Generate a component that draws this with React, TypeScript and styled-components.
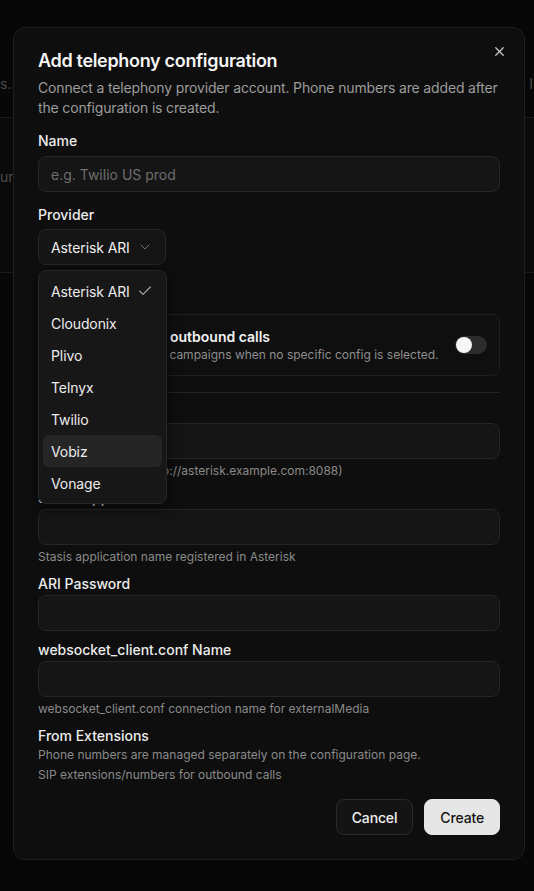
import styled, { createGlobalStyle } from 'styled-components';
import { X, ChevronDown, Check } from 'lucide-react';

const GlobalStyle = createGlobalStyle`
  html, body {
    margin: 0;
    padding: 0;
    background: #070707;
    font-family: Inter, 'Noto Sans', sans-serif;
    -webkit-font-smoothing: antialiased;
  }
  * { box-sizing: border-box; }
`;

const PageBehind = styled.div`
  height: 891px;
  padding-top: 74px;
  color: #4a4a4a;
  font-size: 14px;
  overflow: hidden;
`;

const PageHeader = styled.div`
  display: flex;
  justify-content: space-between;
  height: 20px;
  line-height: 20px;
`;

const PageFragment = styled.span<{ $pad?: number }>`
  padding: 0 ${(p) => p.$pad ?? 0}px;
  white-space: nowrap;
`;

const TableCard = styled.div`
  margin-top: 23px;
  height: 156px;
  background: #0a0a0a;
  border-top: 1px solid #1a1a1a;
  border-bottom: 1px solid #1a1a1a;
  padding-top: 50px;
`;

const Dialog = styled.div`
  position: fixed;
  top: 27px;
  left: 13px;
  width: 512px;
  padding: 24px;
  background: #0e0e0e;
  border: 1px solid #1f1f1f;
  border-radius: 12px;
  color: #f2f2f2;
`;

const CloseButton = styled.button`
  position: absolute;
  top: 15px;
  right: 17px;
  width: 16px;
  height: 16px;
  padding: 0;
  border: none;
  background: none;
  color: #c8c8c8;
  display: flex;
  align-items: center;
  justify-content: center;
`;

const Header = styled.div`
  display: flex;
  flex-direction: column;
  gap: 8px;
`;

const Title = styled.h2`
  margin: 0;
  font-size: 18px;
  line-height: 18px;
  font-weight: 600;
  color: #f5f5f5;
  letter-spacing: -0.32px;
`;

const Description = styled.p`
  margin: 0;
  font-size: 14px;
  line-height: 20px;
  color: #9c9c9c;
  letter-spacing: -0.16px;
`;

const Form = styled.div`
  margin-top: 16px;
  display: flex;
  flex-direction: column;
  gap: 16px;
`;

const Field = styled.div<{ $gap: number }>`
  display: flex;
  flex-direction: column;
  gap: ${(p) => p.$gap}px;
  position: relative;
`;

const Label = styled.label`
  font-size: 14px;
  line-height: 14px;
  font-weight: 500;
  color: #ececec;
`;

const Input = styled.input`
  height: 36px;
  width: 100%;
  padding: 0 12px;
  border-radius: 8px;
  border: 1px solid #262626;
  background: #151515;
  color: #f2f2f2;
  font-family: inherit;
  font-size: 14px;
  outline: none;

  &::placeholder {
    color: #6e6e6e;
  }
`;

const Help = styled.p`
  margin: 0;
  font-size: 12px;
  line-height: 16px;
  color: #8a8a8a;
`;

const SelectTrigger = styled.button`
  align-self: flex-start;
  height: 36px;
  padding: 0 12px;
  display: flex;
  align-items: center;
  gap: 7px;
  border-radius: 8px;
  border: 1px solid #262626;
  background: #151515;
  color: #f0f0f0;
  font-family: inherit;
  font-size: 14px;
  letter-spacing: -0.1px;

  svg {
    color: #707070;
  }
`;

const Popover = styled.div`
  position: absolute;
  top: calc(100% + 5px);
  left: 0;
  z-index: 5;
  width: 129px;
  padding: 4px;
  border-radius: 8px;
  border: 1px solid #272727;
  background: #171717;
  box-shadow: 0 4px 14px rgba(0, 0, 0, 0.5);
`;

const Option = styled.div<{ $active?: boolean }>`
  position: relative;
  height: 32px;
  padding: 0 8px;
  display: flex;
  align-items: center;
  border-radius: 6px;
  font-size: 14px;
  letter-spacing: -0.1px;
  color: #ececec;
  background: ${(p) => (p.$active ? '#252525' : 'transparent')};

  svg {
    position: absolute;
    right: 9px;
    color: #a5a5a5;
  }
`;

const DefaultCard = styled.div`
  margin-top: 33px;
  padding: 12px;
  border: 1px solid #1f1f1f;
  border-radius: 8px;
  background: #0f0f0f;
  display: flex;
  align-items: center;
  justify-content: space-between;
  gap: 8px;
`;

const CardText = styled.div`
  display: flex;
  flex-direction: column;
  white-space: nowrap;
`;

const CardTitle = styled.div`
  font-size: 14px;
  line-height: 20px;
  font-weight: 600;
  color: #f2f2f2;
`;

const CardDesc = styled.div`
  font-size: 12px;
  line-height: 16px;
  color: #8e8e8e;
`;

const Switch = styled.div`
  flex-shrink: 0;
  width: 32px;
  height: 18px;
  border-radius: 9px;
  background: #2c2c2c;
  padding: 1px;
  display: flex;
  align-items: center;
`;

const Knob = styled.div`
  width: 16px;
  height: 16px;
  border-radius: 50%;
  background: #f5f5f5;
`;

const Separator = styled.div`
  height: 1px;
  background: #242424;
`;

const ProviderFields = styled.div`
  margin-top: -4px;
  display: flex;
  flex-direction: column;
  gap: 12px;
`;

const Footer = styled.div`
  margin-top: 16px;
  display: flex;
  justify-content: flex-end;
  gap: 11px;
`;

const Button = styled.button<{ $primary?: boolean }>`
  height: 36px;
  padding: 0 15px;
  border-radius: 8px;
  font-family: inherit;
  font-size: 14px;
  font-weight: 500;
  letter-spacing: -0.15px;
  border: 1px solid ${(p) => (p.$primary ? '#e6e6e6' : '#2a2a2a')};
  background: ${(p) => (p.$primary ? '#e6e6e6' : '#141414')};
  color: ${(p) => (p.$primary ? '#151515' : '#f0f0f0')};
`;

const providers = ['Asterisk ARI', 'Cloudonix', 'Plivo', 'Telnyx', 'Twilio', 'Vobiz', 'Vonage'];

export default function App() {
  return (
    <>
      <GlobalStyle />
      <PageBehind>
        <PageHeader>
          <PageFragment>s.</PageFragment>
          <PageFragment $pad={1}>e I</PageFragment>
        </PageHeader>
        <TableCard>
          <PageFragment>un</PageFragment>
        </TableCard>
      </PageBehind>

      <Dialog>
        <CloseButton aria-label="Close">
          <X size={15} strokeWidth={2} />
        </CloseButton>
        <Header>
          <Title>Add telephony configuration</Title>
          <Description>
            Connect a telephony provider account. Phone numbers are added after the configuration is
            created.
          </Description>
        </Header>

        <Form>
          <Field $gap={8}>
            <Label>Name</Label>
            <Input placeholder="e.g. Twilio US prod" />
          </Field>

          <Field $gap={7}>
            <Label>Provider</Label>
            <SelectTrigger>
              Asterisk ARI
              <ChevronDown size={16} strokeWidth={1.5} />
            </SelectTrigger>
            <Popover>
              {providers.map((name) => (
                <Option key={name} $active={name === 'Vobiz'}>
                  {name}
                  {name === 'Asterisk ARI' && <Check size={16} strokeWidth={1.75} />}
                </Option>
              ))}
            </Popover>
          </Field>

          <DefaultCard>
            <CardText>
              <CardTitle>Set as default for outbound calls</CardTitle>
              <CardDesc>Used for agents and campaigns when no specific config is selected.</CardDesc>
            </CardText>
            <Switch>
              <Knob />
            </Switch>
          </DefaultCard>

          <Separator />

          <ProviderFields>
            <Field $gap={4}>
              <Label>ARI URL</Label>
              <Input />
              <Help>ARI base URL (e.g. http://asterisk.example.com:8088)</Help>
            </Field>
            <Field $gap={4}>
              <Label>Stasis App</Label>
              <Input />
              <Help>Stasis application name registered in Asterisk</Help>
            </Field>
            <Field $gap={4}>
              <Label>ARI Password</Label>
              <Input type="password" />
            </Field>
            <Field $gap={4}>
              <Label>websocket_client.conf Name</Label>
              <Input />
              <Help>websocket_client.conf connection name for externalMedia</Help>
            </Field>
            <Field $gap={4}>
              <Label>From Extensions</Label>
              <Help>Phone numbers are managed separately on the configuration page.</Help>
              <Help>SIP extensions/numbers for outbound calls</Help>
            </Field>
          </ProviderFields>
        </Form>

        <Footer>
          <Button>Cancel</Button>
          <Button $primary>Create</Button>
        </Footer>
      </Dialog>
    </>
  );
}
